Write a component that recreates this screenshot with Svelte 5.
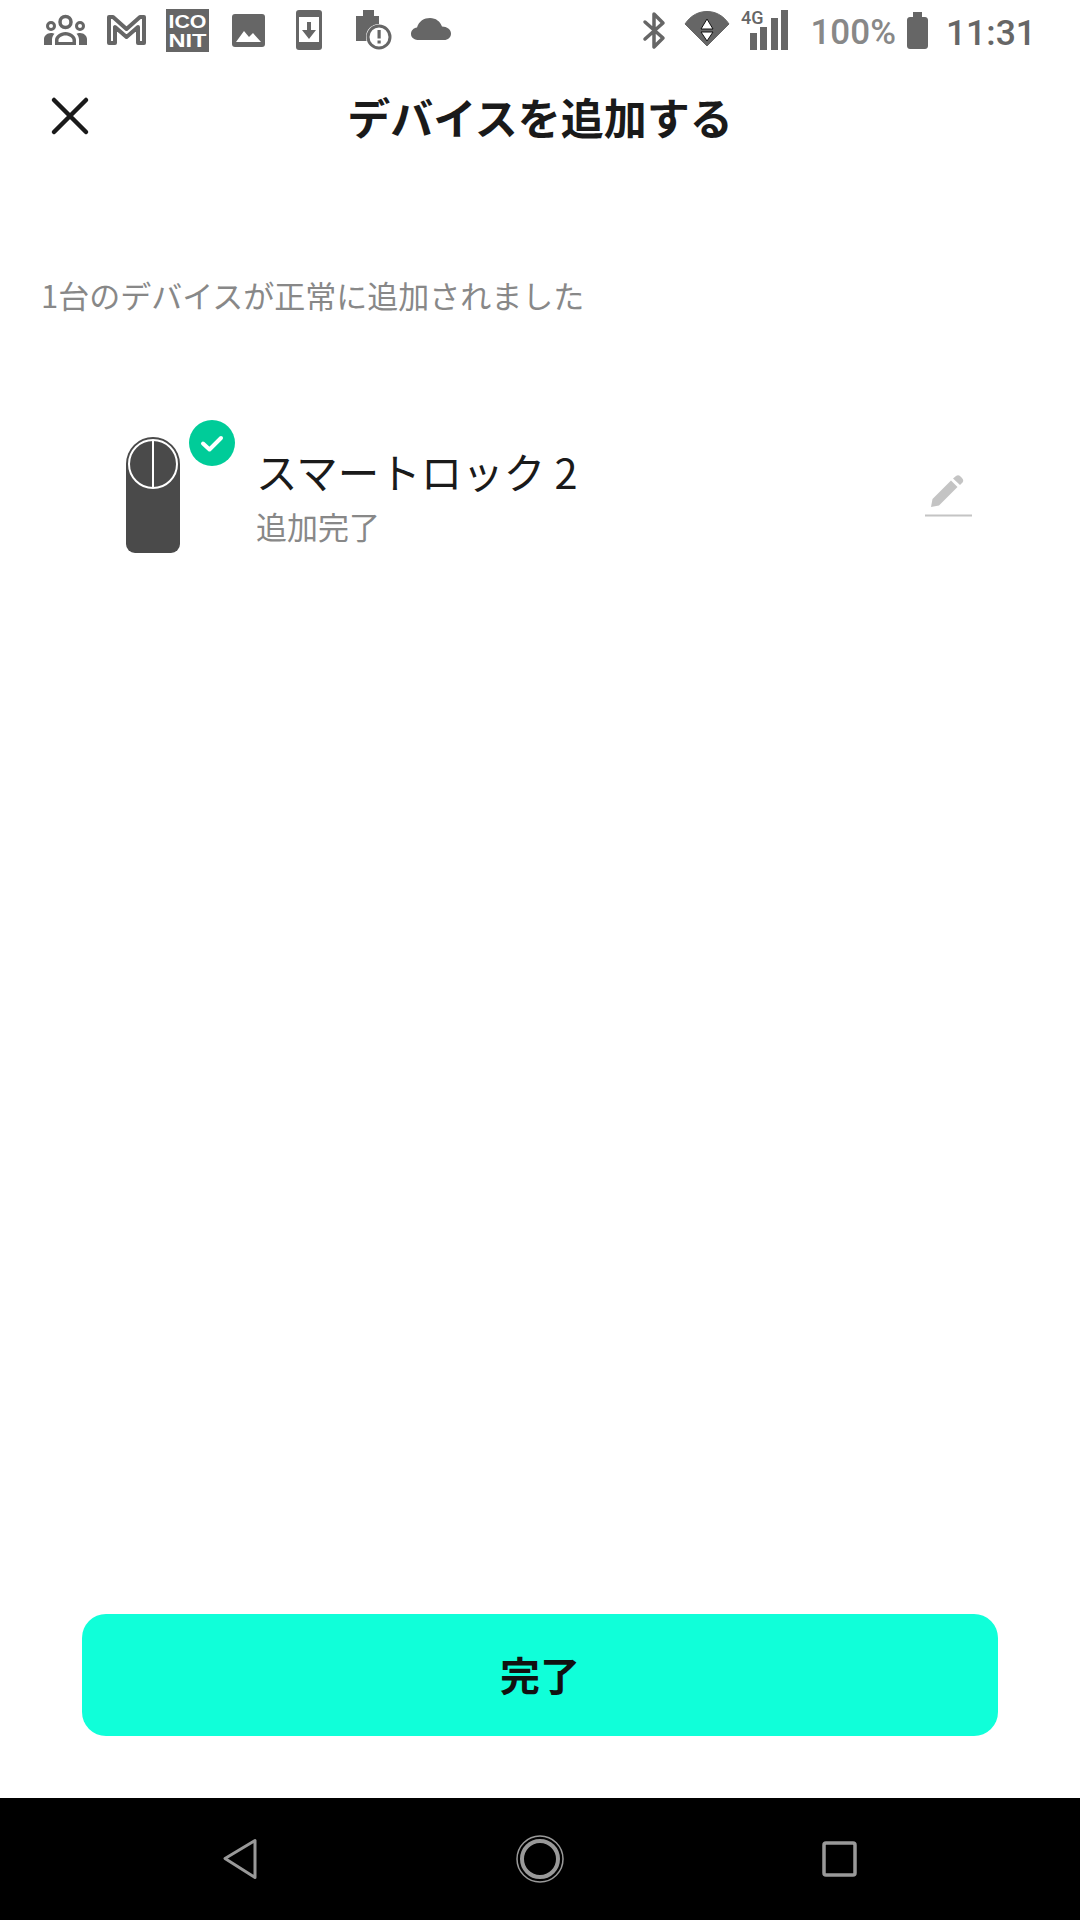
<script>
    let deviceName = "スマートロック 2";
</script>

<div class="page">
    <div class="status">
        <div class="status-left">
            <!-- people -->
            <svg width="43" height="60" viewBox="0 0 43 60" fill="#666">
                <circle cx="21.5" cy="22" r="5.5" fill="none" stroke="#666" stroke-width="3.5" />
                <circle cx="7" cy="26" r="3.5" fill="none" stroke="#666" stroke-width="3" />
                <circle cx="36" cy="26" r="3.5" fill="none" stroke="#666" stroke-width="3" />
                <path d="M0 45v-6c0-3 3-6 7-6 1.500 0 2.500.3 3.500.8-1.500 1.700-2.500 3.700-2.500 5.700V45zM43 45v-6c0-3-3-6-7-6-1.500 0-2.500.3-3.500.8 1.500 1.700 2.500 3.700 2.500 5.700V45z" />
                <path d="M11 45v-5c0-4 5-8 10.500-8S32 36 32 40v5zM14.500 42h14v-2c0-2-3-4.500-7-4.500s-7 2.500-7 4.500z" fill-rule="evenodd" />
            </svg>
            <!-- M mail -->
            <svg width="41" height="60" viewBox="0 0 41 60">
                <path d="M3 43V17h4l13.500 12L34 17h4v26h-6V27l-11.500 10L9 27v16z" fill="none" stroke="#666" stroke-width="4" stroke-linejoin="round" />
            </svg>
            <!-- qr style app logo -->
            <svg width="43" height="60" viewBox="0 0 43 60">
                <rect x="0" y="9" width="43" height="43" fill="#666" />
                <text class="logo-text" x="21.500" y="28" textLength="38" lengthAdjust="spacingAndGlyphs">ICO</text>
                <text class="logo-text" x="21.500" y="47" textLength="38" lengthAdjust="spacingAndGlyphs">NIT</text>
            </svg>
            <!-- image -->
            <svg width="40" height="60" viewBox="0 0 40 60">
                <rect x="4" y="14" width="33" height="33" rx="3" fill="#666" />
                <path d="M8 42l8-11 5 6 4-4 8 9z" fill="#fff" />
            </svg>
            <!-- download -->
            <svg width="44" height="60" viewBox="0 0 44 60">
                <rect x="9" y="10" width="26" height="40" rx="3" fill="#666" />
                <rect x="12" y="17" width="20" height="25" fill="#fff" />
                <path d="M20 22h4v8h5l-7 9-7-9h5z" fill="#666" />
            </svg>
            <!-- battery alert -->
            <svg width="42" height="60" viewBox="0 0 42 60">
                <path d="M6 41V16h7v-6h11v6h5v25z" fill="#666" />
                <circle cx="29" cy="37" r="13" fill="#fff" />
                <circle cx="29" cy="37" r="11" fill="#fff" stroke="#666" stroke-width="3" />
                <rect x="27.500" y="30" width="3.200" height="8.500" fill="#666" />
                <rect x="27.500" y="40.500" width="3.200" height="3" fill="#666" />
            </svg>
            <!-- cloud -->
            <svg width="40" height="60" viewBox="0 0 40 60">
                <path d="M8 40c-4 0-8-2-8-6 0-3.500 2.500-6 6-6.500C8 21 13 18 19 18c6 0 10 3.500 12 8.500 5 0 9 3 9 7 0 4-3 6.500-7 6.500z" fill="#666" />
            </svg>
        </div>
        <div class="status-right">
            <!-- bluetooth -->
            <svg width="31" height="60" viewBox="0 0 31 60">
                <path d="M3 22l18 16-9 9V14l9 9-18 16" fill="none" stroke="#666" stroke-width="3.500" stroke-linecap="round" stroke-linejoin="round" />
            </svg>
            <!-- wifi with data arrows -->
            <svg width="46" height="60" viewBox="0 0 46 60">
                <path d="M1 24C7 15 15 11.500 23 11.500S39 15 45 24L23 46z" fill="#666" stroke="#666" stroke-linejoin="round" />
                <path d="M23 19l6 10H17zM23 41l-6-9h12z" fill="#fff" stroke="#111" stroke-width="1" stroke-linejoin="round" />
            </svg>
            <!-- 4G signal -->
            <svg width="58" height="60" viewBox="0 0 58 60" fill="#666">
                <text class="net-text" x="0" y="24">4G</text>
                <rect x="9" y="33" width="7" height="17" />
                <rect x="19" y="27" width="7" height="23" />
                <rect x="30" y="18" width="7" height="32" />
                <rect x="40" y="10" width="7" height="40" />
            </svg>
            <span class="percent">100%</span>
            <!-- battery -->
            <svg width="28" height="60" viewBox="0 0 28 60">
                <path d="M6 17v-5h9v5h3c1.500 0 3 1 3 3v26c0 2-1.500 3-3 3H3c-1.500 0-3-1-3-3V20c0-2 1.500-3 3-3z" fill="#666" />
            </svg>
            <span class="time">11:31</span>
        </div>
    </div>

    <header class="topbar">
        <button class="close" aria-label="閉じる">
            <svg width="40" height="40" viewBox="0 0 40 40">
                <path d="M4 4l32 32M36 4L4 36" stroke="#1a1a1a" stroke-width="4.500" fill="none" stroke-linecap="round" />
            </svg>
        </button>
        <h1>デバイスを追加する</h1>
    </header>

    <p class="result">1台のデバイスが正常に追加されました</p>

    <div class="device">
        <div class="device-icon">
            <svg width="54" height="116" viewBox="0 0 54 116">
                <path d="M0 27a27 27 0 0 1 54 0v80a9 9 0 0 1-9 9H9a9 9 0 0 1-9-9z" fill="#4a4a4a" />
                <circle cx="27" cy="27" r="24" fill="none" stroke="#fff" stroke-width="2" />
                <path d="M27 3v48" stroke="#fff" stroke-width="2" />
            </svg>
            <span class="badge">
                <svg width="46" height="46" viewBox="0 0 46 46">
                    <circle cx="23" cy="23" r="23" fill="#00cc99" />
                    <path d="M14 23.500l6.500 6L32 18" fill="none" stroke="#fff" stroke-width="4" stroke-linecap="round" stroke-linejoin="round" />
                </svg>
            </span>
        </div>
        <div class="device-text">
            <div class="device-name">{deviceName}</div>
            <div class="device-state">追加完了</div>
        </div>
        <button class="edit" aria-label="編集">
            <svg width="47" height="42" viewBox="0 0 47 42">
                <path d="M6 32l1.500-8L26 5.500l6.500 6.500L14 30.500z" fill="#c4c4c4" />
                <path d="M28 3.500l3-2.500c1.500-1 3-1 4.500.5l1.500 1.500c1.500 1.500 1.500 3 .5 4.500L35 10z" fill="#c4c4c4" />
                <rect x="0" y="39.500" width="47" height="2" fill="#c4c4c4" />
            </svg>
        </button>
    </div>

    <div class="footer">
        <button class="done">完了</button>
    </div>

    <nav class="navbar">
        <svg width="40" height="44" viewBox="0 0 40 44">
            <path d="M5 21.500L35 3.500v37z" fill="none" stroke="#999" stroke-width="3" stroke-linejoin="round" />
        </svg>
        <svg width="50" height="50" viewBox="0 0 50 50">
            <circle cx="25" cy="25" r="23" fill="none" stroke="#999" stroke-width="1.500" />
            <circle cx="25" cy="25" r="18" fill="none" stroke="#999" stroke-width="4" />
        </svg>
        <svg width="38" height="38" viewBox="0 0 38 38">
            <rect x="3" y="3" width="31" height="32" rx="2" fill="none" stroke="#999" stroke-width="3.500" />
        </svg>
    </nav>
</div>

<style>
    :global(body) {
        margin: 0;
        background: #fff;
    }

    .page {
        width: 1080px;
        height: 1920px;
        display: flex;
        flex-direction: column;
        background: #fff;
        font-family: "Noto Sans CJK JP", "Noto Sans", sans-serif;
        color: #1a1a1a;
    }

    .status {
        height: 60px;
        flex: none;
        display: flex;
        justify-content: space-between;
        padding: 0 44px;
        font-family: Roboto, sans-serif;
    }

    .status-left {
        display: flex;
        gap: 19px;
    }

    .status-right {
        display: flex;
        gap: 11px;
        align-items: center;
    }

    .logo-text {
        fill: #fff;
        font-family: "Liberation Sans", sans-serif;
        font-size: 19px;
        font-weight: 700;
        text-anchor: middle;
    }

    .net-text {
        font-family: Roboto, sans-serif;
        font-size: 18px;
        font-weight: 500;
    }

    .percent {
        font-size: 35px;
        font-weight: 500;
        color: #888;
        line-height: 60px;
        padding-top: 6px;
    }

    .time {
        font-size: 35.500px;
        font-weight: 500;
        color: #666;
        line-height: 60px;
        padding-top: 6px;
    }

    .topbar {
        height: 112px;
        flex: none;
        position: relative;
        display: flex;
        align-items: center;
        justify-content: center;
    }

    .topbar h1 {
        margin: 0;
        font-size: 43px;
        font-weight: 700;
        line-height: 60px;
    }

    .close {
        position: absolute;
        left: 50px;
        top: 36px;
        padding: 0;
        border: none;
        background: none;
        display: flex;
    }

    .result {
        margin: 101px 0 0;
        padding-left: 41px;
        font-size: 31px;
        line-height: 44px;
        color: #888;
    }

    .device {
        margin-top: 120px;
        padding: 0 108px 0 126px;
        display: flex;
        align-items: flex-start;
    }

    .device-icon {
        position: relative;
        width: 54px;
        height: 116px;
        flex: none;
    }

    .device-icon svg {
        display: block;
    }

    .badge {
        position: absolute;
        left: 63px;
        top: -17px;
    }

    .device-text {
        margin-left: 76px;
        flex: 1;
    }

    .device-name {
        font-size: 41.500px;
        line-height: 60px;
        margin-top: 4px;
    }

    .device-state {
        font-size: 31px;
        line-height: 44px;
        color: #888;
        margin-top: 3px;
    }

    .edit {
        padding: 0;
        border: none;
        background: none;
        margin-top: 38px;
        display: flex;
    }

    .footer {
        margin-top: auto;
        padding: 0 82px 62px;
    }

    .done {
        width: 100%;
        height: 122px;
        border: none;
        border-radius: 24px;
        background: #10ffd9;
        font-family: inherit;
        font-size: 40px;
        font-weight: 700;
        color: #111;
        padding-bottom: 3px;
    }

    .navbar {
        height: 122px;
        flex: none;
        background: #000;
        display: grid;
        grid-template-columns: repeat(3, 300px);
        padding-left: 90px;
        justify-items: center;
        align-items: center;
    }
</style>
